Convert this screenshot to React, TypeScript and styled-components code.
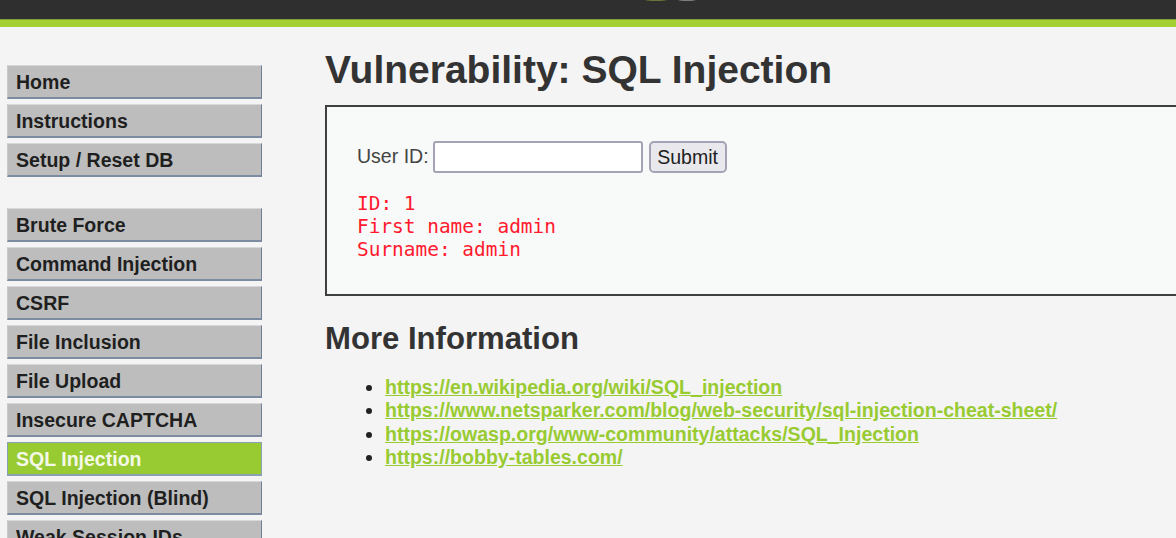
import React from "react";
import styled, { createGlobalStyle } from "styled-components";

const Global = createGlobalStyle`
  html, body { margin: 0; height: 538px; overflow: hidden; background: #f4f4f4; }
  body { font-family: "Liberation Sans", Arial, sans-serif; color: #333; }
`;

const Page = styled.div`
  width: 1176px;
  height: 538px;
  overflow: hidden;
  display: flex;
  flex-direction: column;
`;

const Header = styled.header`
  flex: none;
  height: 19px;
  background: #2f2f2f;
  border-bottom: 8px solid #a5d031;
  position: relative;
`;

const HeaderEdge = styled.div`
  position: absolute;
  left: 0;
  right: 0;
  top: 19px;
  height: 1px;
  background: #7f9f34;
`;

const LogoSliver = styled.svg`
  position: absolute;
  left: 640px;
  top: 0;
`;

const Body = styled.div`
  flex: 1;
  display: flex;
  min-height: 0;
`;

const Side = styled.nav`
  flex: none;
  width: 325px;
  padding: 38px 0 0 7px;
  box-sizing: border-box;
`;

const MenuGroup = styled.ul`
  list-style: none;
  margin: 0 0 31px;
  padding: 0;
  width: 255px;
  display: flex;
  flex-direction: column;
  gap: 5px;
`;

const MenuItem = styled.li<{ $active?: boolean }>`
  height: 34px;
  box-sizing: border-box;
  padding: 1px 0 0 8px;
  display: flex;
  align-items: center;
  font-size: 19.55px;
  font-weight: 700;
  white-space: nowrap;
  color: ${(p) => (p.$active ? "#f4f8e8" : "#1f1f1f")};
  background: ${(p) => (p.$active ? "#98cb31" : "#bdbdbd")};
  border-style: solid;
  border-width: 1px 1px 2px 1px;
  border-color: ${(p) =>
    p.$active ? "#8aa0b4" : "#d8d8d8 #6f7f96 #7d8ba3 #c8c8c8"};
`;

const Main = styled.main`
  flex: 1;
  min-width: 0;
  padding-top: 18px;
`;

const Title = styled.h1`
  margin: 0 0 11px;
  font-size: 39px;
  line-height: 49px;
  font-weight: 700;
  color: #333;
  white-space: nowrap;
`;

const Box = styled.section`
  width: 870px;
  height: 191px;
  box-sizing: border-box;
  background: #f8f9f9;
  border: 2px solid #3f3f3f;
  padding: 34px 0 0 30px;
`;

const Form = styled.form`
  display: flex;
  align-items: center;
  height: 32px;
  font-size: 19.55px;
  color: #444;
`;

const Label = styled.label`
  margin-right: 4px;
  position: relative;
  top: -1px;
`;

const Input = styled.input`
  width: 210px;
  height: 32px;
  box-sizing: border-box;
  background: #fff;
  border: 2px solid #a3a3b5;
  border-radius: 3px;
  margin: 0 6px 0 0;
  padding: 0;
`;

const Submit = styled.button`
  width: 78px;
  height: 32px;
  box-sizing: border-box;
  padding: 1px 0 0;
  background: #e9e9ed;
  border: 2px solid #a3a3b5;
  border-radius: 5px;
  font-family: inherit;
  font-size: 19.55px;
  color: #222;
`;

const Result = styled.pre`
  margin: 19px 0 0;
  font-family: "DejaVu Sans Mono", monospace;
  font-size: 19.45px;
  line-height: 23px;
  color: #ff1a2e;
`;

const SubTitle = styled.h2`
  margin: 24px 0 0;
  font-size: 31.1px;
  line-height: 38px;
  font-weight: 700;
  color: #333;
`;

const Links = styled.ul`
  margin: 18px 0 0;
  padding: 0 0 0 60px;
  font-size: 19.55px;
  line-height: 23.3px;
  color: #222;
`;

const Anchor = styled.a`
  color: #98cb31;
  font-weight: 700;
  text-decoration: underline;
`;

const top = ["Home", "Instructions", "Setup / Reset DB"];
const vulns = [
  "Brute Force",
  "Command Injection",
  "CSRF",
  "File Inclusion",
  "File Upload",
  "Insecure CAPTCHA",
  "SQL Injection",
  "SQL Injection (Blind)",
  "Weak Session IDs",
];
const links = [
  "https://en.wikipedia.org/wiki/SQL_injection",
  "https://www.netsparker.com/blog/web-security/sql-injection-cheat-sheet/",
  "https://owasp.org/www-community/attacks/SQL_Injection",
  "https://bobby-tables.com/",
];

export default function App() {
  return (
    <Page>
      <Global />
      <Header>
        <HeaderEdge />
        <LogoSliver width="60" height="2" viewBox="0 0 60 2">
          <ellipse cx="16" cy="-0.2" rx="11" ry="1" fill="#7d8f3c" />
          <ellipse cx="47" cy="-0.2" rx="9" ry="1" fill="#9a9a9a" />
        </LogoSliver>
      </Header>
      <Body>
        <Side>
          <MenuGroup>
            {top.map((t) => (
              <MenuItem key={t}>{t}</MenuItem>
            ))}
          </MenuGroup>
          <MenuGroup>
            {vulns.map((t) => (
              <MenuItem key={t} $active={t === "SQL Injection"}>
                {t}
              </MenuItem>
            ))}
          </MenuGroup>
        </Side>
        <Main>
          <Title>Vulnerability: SQL Injection</Title>
          <Box>
            <Form onSubmit={(e) => e.preventDefault()}>
              <Label>User ID:</Label>
              <Input type="text" />
              <Submit type="submit">Submit</Submit>
            </Form>
            <Result>{"ID: 1\nFirst name: admin\nSurname: admin"}</Result>
          </Box>
          <SubTitle>More Information</SubTitle>
          <Links>
            {links.map((l) => (
              <li key={l}>
                <Anchor href="#">{l}</Anchor>
              </li>
            ))}
          </Links>
        </Main>
      </Body>
    </Page>
  );
}
